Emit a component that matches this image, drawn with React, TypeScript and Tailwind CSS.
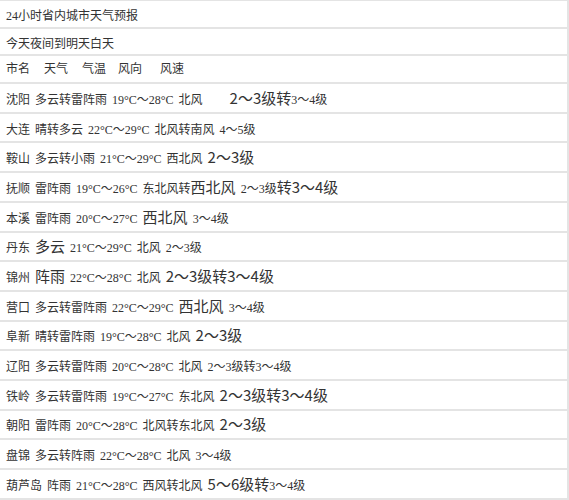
type Seg = [string, "s" | "L" | "gap"]

const rows: Seg[][] = [
  [["沈阳 多云转雷阵雨 19°C～28°C 北风", "s"], ["2～3级转", "gap"], ["3～4级", "s"]],
  [["大连 晴转多云 22°C～29°C 北风转南风 4～5级", "s"]],
  [["鞍山 多云转小雨 21°C～29°C 西北风 ", "s"], ["2～3级", "L"]],
  [["抚顺 雷阵雨 19°C～26°C 东北风转", "s"], ["西北风", "L"], [" 2～3级", "s"], ["转3～4级", "L"]],
  [["本溪 雷阵雨 20°C～27°C ", "s"], ["西北风", "L"], [" 3～4级", "s"]],
  [["丹东 ", "s"], ["多云", "L"], [" 21°C～29°C 北风 2～3级", "s"]],
  [["锦州 ", "s"], ["阵雨", "L"], [" 22°C～28°C 北风 ", "s"], ["2～3级转3～4级", "L"]],
  [["营口 多云转雷阵雨 22°C～29°C ", "s"], ["西北风", "L"], [" 3～4级", "s"]],
  [["阜新 晴转雷阵雨 19°C～28°C 北风 ", "s"], ["2～3级", "L"]],
  [["辽阳 多云转雷阵雨 20°C～28°C 北风 2～3级转3～4级", "s"]],
  [["铁岭 多云转雷阵雨 19°C～27°C 东北风 ", "s"], ["2～3级转3～4级", "L"]],
  [["朝阳 雷阵雨 20°C～28°C 北风转东北风 ", "s"], ["2～3级", "L"]],
  [["盘锦 多云转阵雨 22°C～28°C 北风 3～4级", "s"]],
  [["葫芦岛 阵雨 21°C～28°C 西风转北风 ", "s"], ["5～6级转", "L"], ["3～4级", "s"]],
]

const serif = "font-['Liberation_Serif','Noto_Sans_CJK_SC',serif] text-[12px] [word-spacing:2px]"
const sans = "font-['Noto_Sans_CJK_SC',sans-serif] text-[15px]"

function Row({ children, tall }: { children: React.ReactNode; tall?: boolean }) {
  return (
    <div
      className={`flex items-center pl-[6px] border-b-2 border-[#e4e4e4] whitespace-pre ${
        tall ? "h-[29.7px]" : "h-[27.7px]"
      }`}
    >
      <div className="leading-none">{children}</div>
    </div>
  )
}

export default function App() {
  return (
    <div className="w-[569px] h-[500px] bg-white text-[#333] overflow-hidden">
      <div className="border-t border-r-2 border-[#e4e4e4]">
        <Row>
          <span className={serif}>24小时省内城市天气预报</span>
        </Row>
        <Row>
          <span className={serif}>今天夜间到明天白天</span>
        </Row>
        <Row>
          <span className={`${serif} flex`}>
            <span>市名</span>
            <span className="ml-[14px]">天气</span>
            <span className="ml-[14px]">气温</span>
            <span className="ml-[12px]">风向</span>
            <span className="ml-[18px]">风速</span>
          </span>
        </Row>
        {rows.map((segs, i) => (
          <Row key={i} tall>
            {segs.map(([t, k], j) => (
              <span
                key={j}
                className={k === "s" ? serif : k === "gap" ? `${sans} ml-[27px]` : sans}
              >
                {t}
              </span>
            ))}
          </Row>
        ))}
      </div>
    </div>
  )
}
